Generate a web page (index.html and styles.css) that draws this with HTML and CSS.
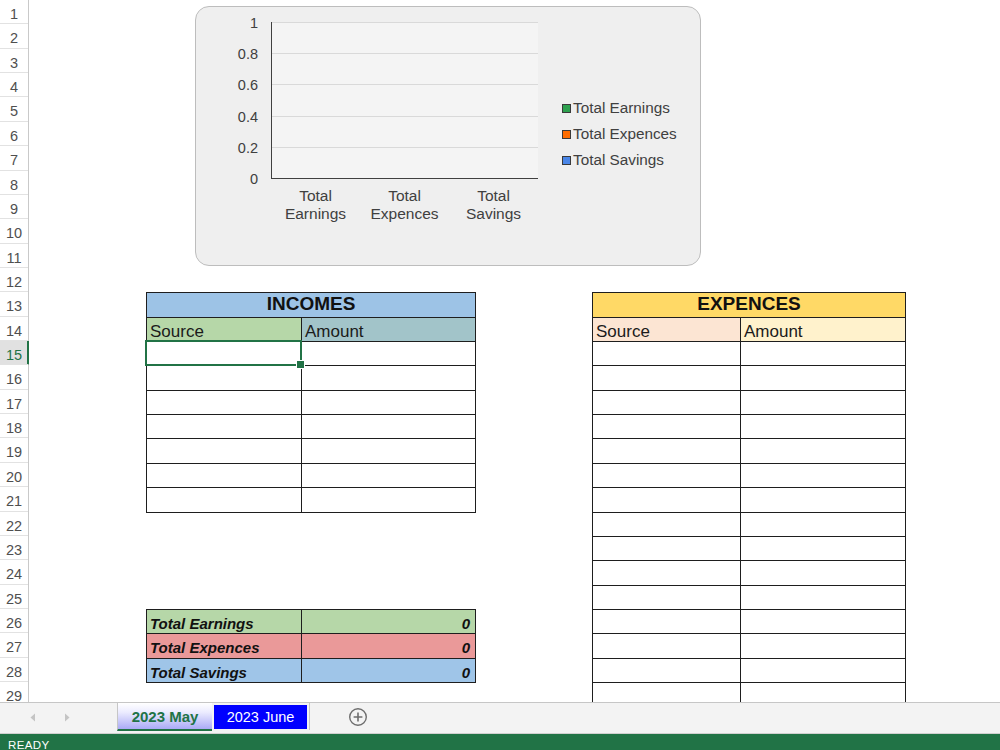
FILE: index.html
```html
<!DOCTYPE html>
<html lang="en">
<head>
<meta charset="utf-8">
<title>Budget 2023 May</title>
<link rel="stylesheet" href="styles.css">
</head>
<body>
<div class="app">
  <div class="sheet">
    <div class="rowhead">
      <div class="rh">1</div><div class="rh">2</div><div class="rh">3</div><div class="rh">4</div>
      <div class="rh">5</div><div class="rh">6</div><div class="rh">7</div><div class="rh">8</div>
      <div class="rh">9</div><div class="rh">10</div><div class="rh">11</div><div class="rh">12</div>
      <div class="rh">13</div><div class="rh">14</div><div class="rh cur">15</div><div class="rh">16</div>
      <div class="rh">17</div><div class="rh">18</div><div class="rh">19</div><div class="rh">20</div>
      <div class="rh">21</div><div class="rh">22</div><div class="rh">23</div><div class="rh">24</div>
      <div class="rh">25</div><div class="rh">26</div><div class="rh">27</div><div class="rh">28</div>
      <div class="rh">29</div>
    </div>
    <div class="canvas">
      <div class="chart">
        <div class="yaxis">
          <div class="yl">1</div><div class="yl">0.8</div><div class="yl">0.6</div>
          <div class="yl">0.4</div><div class="yl">0.2</div><div class="yl">0</div>
        </div>
        <div class="plotcol">
          <div class="plot">
            <div class="gl"></div><div class="gl"></div><div class="gl"></div><div class="gl"></div><div class="gl"></div>
          </div>
          <div class="cats">
            <div>Total<br>Earnings</div>
            <div>Total<br>Expences</div>
            <div>Total<br>Savings</div>
          </div>
        </div>
        <div class="legend">
          <div class="li"><span class="sw sw-g"></span>Total Earnings</div>
          <div class="li"><span class="sw sw-o"></span>Total Expences</div>
          <div class="li"><span class="sw sw-b"></span>Total Savings</div>
        </div>
      </div>

      <div class="tbl inc">
        <div class="c hd hd-inc">INCOMES</div>
        <div class="c src-inc">Source</div><div class="c amt-inc">Amount</div>
        <div class="c sel"></div><div class="c"></div>
        <div class="c"></div><div class="c"></div>
        <div class="c"></div><div class="c"></div>
        <div class="c"></div><div class="c"></div>
        <div class="c"></div><div class="c"></div>
        <div class="c"></div><div class="c"></div>
        <div class="c"></div><div class="c"></div>
      </div>

      <div class="tbl exp">
        <div class="c hd hd-exp">EXPENCES</div>
        <div class="c src-exp">Source</div><div class="c amt-exp">Amount</div>
        <div class="c"></div><div class="c"></div>
        <div class="c"></div><div class="c"></div>
        <div class="c"></div><div class="c"></div>
        <div class="c"></div><div class="c"></div>
        <div class="c"></div><div class="c"></div>
        <div class="c"></div><div class="c"></div>
        <div class="c"></div><div class="c"></div>
        <div class="c"></div><div class="c"></div>
        <div class="c"></div><div class="c"></div>
        <div class="c"></div><div class="c"></div>
        <div class="c"></div><div class="c"></div>
        <div class="c"></div><div class="c"></div>
        <div class="c"></div><div class="c"></div>
        <div class="c"></div><div class="c"></div>
        <div class="c"></div><div class="c"></div>
      </div>

      <div class="tbl tot">
        <div class="c t t-earn">Total Earnings</div><div class="c t t-earn num">0</div>
        <div class="c t t-exp">Total Expences</div><div class="c t t-exp num">0</div>
        <div class="c t t-sav">Total Savings</div><div class="c t t-sav num">0</div>
      </div>
    </div>
  </div>

  <div class="tabbar">
    <div class="nav">
      <svg class="arr" width="6" height="9" viewBox="0 0 6 9"><path d="M5 0.5 L0.5 4.5 L5 8.5 Z" fill="#c4c4c4"/></svg>
      <svg class="arr" width="6" height="9" viewBox="0 0 6 9"><path d="M1 0.5 L5.5 4.5 L1 8.5 Z" fill="#c4c4c4"/></svg>
    </div>
    <div class="tab may">2023 May</div>
    <div class="tabslot"><div class="tab june">2023 June</div></div>
    <svg class="plus" width="20" height="20" viewBox="0 0 20 20">
      <circle cx="10" cy="10" r="8.3" fill="none" stroke="#6e6e6e" stroke-width="1.4"/>
      <path d="M10 5.6 V14.4 M5.6 10 H14.4" stroke="#6e6e6e" stroke-width="1.6"/>
    </svg>
  </div>

  <div class="status"><span class="st">READY</span></div>
</div>
</body>
</html>
```

FILE: styles.css
```css
* { box-sizing: border-box; }
html, body {
  margin: 0;
  padding: 0;
  width: 1000px;
  height: 750px;
  overflow: hidden;
  background: #ffffff;
  font-family: "Liberation Sans", Arial, sans-serif;
}
.app {
  display: flex;
  flex-direction: column;
  width: 1000px;
  height: 750px;
}

/* sheet */
.sheet {
  flex: none;
  height: 702px;
  display: flex;
  overflow: hidden;
}
.rowhead {
  flex: none;
  width: 29px;
  display: flex;
  flex-direction: column;
  border-right: 1px solid #c9c9c9;
}
.rh {
  flex: none;
  height: 24.36px;
  border-bottom: 1px solid #e2e2e2;
  font-size: 14.5px;
  color: #4f4f4f;
  text-align: center;
  padding-top: 2px;
  line-height: 24px;
}
.rh.cur {
  background: #e1e1e1;
  color: #217346;
  box-shadow: inset -1px 0 0 #217346;
  margin-right: -1px;
  border-right: 1px solid #217346;
}
.canvas {
  flex: 1;
  position: relative;
  display: grid;
  grid-template-columns: 117px 155px 174px 117px 148px 165px 1fr;
  grid-template-rows: repeat(30, 24.36px);
}

/* chart */
.chart {
  position: absolute;
  left: 166px;
  top: 6px;
  width: 506px;
  height: 260px;
  border: 1px solid #bdbdbd;
  border-radius: 14px;
  background: #efefef;
  display: flex;
  align-items: flex-start;
  color: #404040;
}
.yaxis {
  flex: none;
  width: 62px;
  display: flex;
  flex-direction: column;
}
.yl {
  height: 31.2px;
  line-height: 32px;
  text-align: right;
  font-size: 14.5px;
}
.plotcol {
  flex: none;
  width: 267px;
  margin-left: 13px;
  margin-top: 15px;
}
.plot {
  height: 157px;
  border-left: 1px solid #404040;
  border-bottom: 1px solid #404040;
  background: #f4f4f4;
}
.gl {
  height: 31.2px;
  border-top: 1px solid #d9d9d9;
}
.cats {
  display: grid;
  grid-template-columns: repeat(3, 1fr);
  text-align: center;
  font-size: 15.5px;
  line-height: 18px;
  padding-top: 8px;
}
.legend {
  flex: none;
  margin-left: 24px;
  margin-top: 88px;
  display: flex;
  flex-direction: column;
}
.li {
  height: 26px;
  display: flex;
  align-items: center;
  gap: 2px;
  font-size: 15.3px;
}
.sw {
  width: 9px;
  height: 9px;
  border: 1px solid #3a3a3a;
}
.sw-g { background: #2ea14f; }
.sw-o { background: #ff6d01; }
.sw-b { background: #4a86e8; }

/* tables */
.tbl {
  display: grid;
  align-self: start;
  justify-self: start;
  border-left: 1px solid #1e1e1e;
  border-top: 1px solid #1e1e1e;
}
.inc {
  grid-column: 2 / 4;
  grid-row: 13 / 22;
  grid-template-columns: 155px 174px;
}
.exp {
  grid-column: 5 / 7;
  grid-row: 13 / 31;
  grid-template-columns: 148px 165px;
}
.tot {
  grid-column: 2 / 4;
  grid-row: 26 / 29;
  grid-template-columns: 155px 174px;
}
.c {
  height: 24.36px;
  border-right: 1px solid #1e1e1e;
  border-bottom: 1px solid #1e1e1e;
  background: #ffffff;
  font-size: 17px;
  color: #1b1b1b;
  padding: 3px 3px 0 3px;
  line-height: 21px;
  white-space: nowrap;
}
.hd {
  grid-column: span 2;
  text-align: center;
  font-weight: bold;
  font-size: 19px;
  padding-top: 0;
  line-height: 22px;
  color: #111111;
}
.hd-inc { background: #9dc3e6; }
.src-inc { background: #b6d7a8; }
.amt-inc { background: #a2c4c9; }
.hd-exp { background: #ffd966; }
.src-exp { background: #fce5d3; }
.amt-exp { background: #fff2cc; }

.sel { position: relative; }
.sel::after {
  content: "";
  position: absolute;
  left: -2px;
  top: -2px;
  right: -1px;
  bottom: -1px;
  border: 2px solid #217346;
}
.sel::before {
  content: "";
  position: absolute;
  right: -4px;
  bottom: -4px;
  width: 7px;
  height: 7px;
  background: #217346;
  border: 1px solid #ffffff;
  z-index: 1;
}

.t {
  font-size: 15px;
  font-weight: bold;
  font-style: italic;
  color: #111111;
}
.num { text-align: right; padding-right: 5px; }
.t-earn { background: #b6d7a8; }
.t-exp { background: #ea9999; }
.t-sav { background: #9fc5e8; }

/* tab bar */
.tabbar {
  flex: none;
  height: 32px;
  border-top: 1px solid #c6c6c6;
  border-bottom: 1px solid #d0d0d0;
  background: #f3f3f3;
  display: flex;
  align-items: flex-start;
}
.nav {
  flex: none;
  width: 117px;
  height: 28px;
  display: flex;
  align-items: center;
  padding-left: 30px;
  gap: 28px;
}
.tab {
  flex: none;
  text-align: center;
  white-space: nowrap;
}
.may {
  width: 95px;
  height: 28px;
  border-left: 1px solid #c6c6c6;
  border-bottom: 2px solid #217346;
  background: linear-gradient(to bottom, #ffffff 0%, #ececff 35%, #aaaaf6 100%);
  color: #217346;
  font-weight: bold;
  font-size: 15px;
  line-height: 27px;
}
.tabslot {
  flex: none;
  height: 27px;
  padding: 2px 2px 0 2px;
  border-right: 1px solid #c6c6c6;
}
.june {
  width: 93px;
  height: 24px;
  background: #0000ff;
  color: #ffffff;
  font-size: 14.5px;
  line-height: 24px;
}
.plus {
  flex: none;
  margin-left: 38px;
  margin-top: 4px;
}

/* status bar */
.status {
  flex: none;
  height: 16px;
  overflow: hidden;
  background: #217346;
  color: #ffffff;
  padding: 5px 0 0 8px;
}
.st {
  display: block;
  font-size: 11.5px;
  line-height: 12px;
  letter-spacing: 0.4px;
}
```
